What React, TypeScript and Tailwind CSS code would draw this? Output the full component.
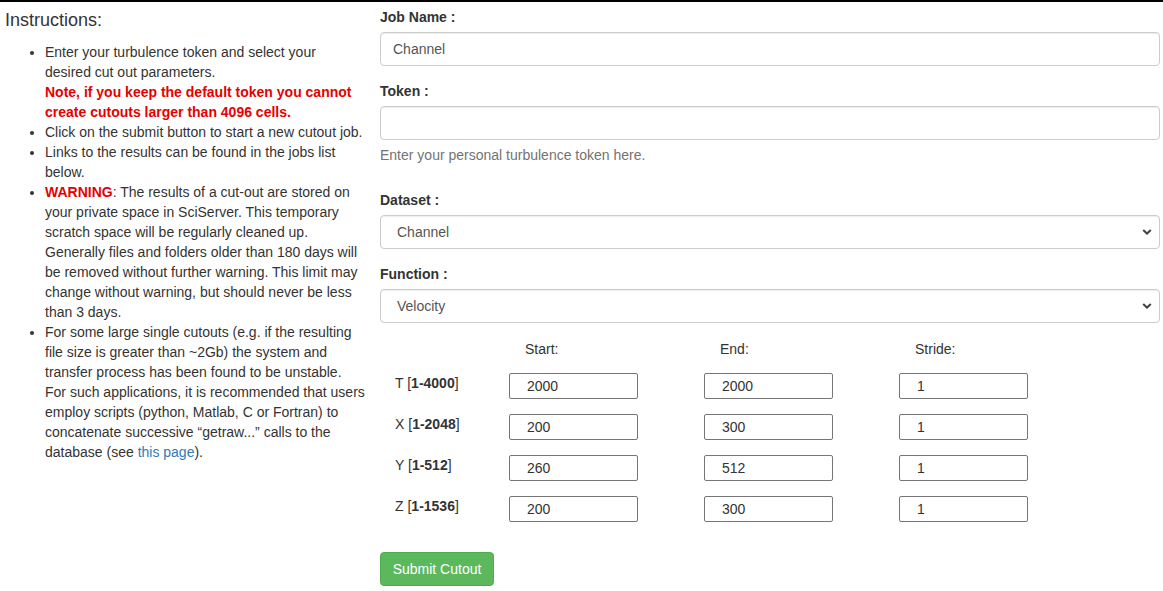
import React from "react";

const font = { fontFamily: '"Liberation Sans", Arial, Helvetica, sans-serif' };

function Chevron() {
  return (
    <svg
      className="pointer-events-none absolute right-[8px] top-1/2 -translate-y-1/2"
      width="10"
      height="7"
      viewBox="0 0 10 7"
    >
      <path d="M1.2 1.4 L5 5 L8.8 1.4" fill="none" stroke="#444" strokeWidth="2" />
    </svg>
  );
}

function Select({ value }: { value: string }) {
  return (
    <div className="relative h-[34px] w-full">
      <select
        defaultValue={value}
        className="h-[34px] w-full appearance-none rounded-[4px] border border-[#ccc] bg-white pl-[16px] text-[14px] text-[#555] shadow-[inset_0_1px_1px_rgba(0,0,0,0.075)] outline-none"
        style={font}
      >
        <option>{value}</option>
      </select>
      <Chevron />
    </div>
  );
}

function NumInput({ value }: { value: string }) {
  return (
    <input
      defaultValue={value}
      className="h-[26px] w-[129px] rounded-[2px] border border-[#767676] bg-white pl-[17px] text-[14px] text-[#333] outline-none"
      style={font}
    />
  );
}

const rows = [
  { axis: "T", range: "1-4000", start: "2000", end: "2000", stride: "1" },
  { axis: "X", range: "1-2048", start: "200", end: "300", stride: "1" },
  { axis: "Y", range: "1-512", start: "260", end: "512", stride: "1" },
  { axis: "Z", range: "1-1536", start: "200", end: "300", stride: "1" },
];

export default function App() {
  return (
    <div
      className="h-[591px] w-[1163px] overflow-hidden border-t-2 border-black bg-white text-[14px] leading-[20px] text-[#333]"
      style={font}
    >
      <div className="flex">
        {/* Left column */}
        <div className="w-[365px] shrink-0 pl-[5px] pt-[8px]">
          <div className="text-[18px] leading-[20px] text-[#333]">Instructions:</div>
          <ul className="mt-[12px] list-disc pl-[40px]">
            <li>
              Enter your turbulence token and select your desired cut out parameters.
              <br />
              <b className="text-[#e60000]">
                Note, if you keep the default token you cannot create cutouts larger than 4096 cells.
              </b>
            </li>
            <li>Click on the submit button to start a new cutout job.</li>
            <li>Links to the results can be found in the jobs list below.</li>
            <li>
              <b className="text-[#e60000]">WARNING</b>: The results of a cut-out are stored on your
              private space in SciServer. This temporary scratch space will be regularly cleaned up.
              Generally files and folders older than 180 days will be removed without further
              warning. This limit may change without warning, but should never be less than 3 days.
            </li>
            <li>
              For some large single cutouts (e.g. if the resulting file size is greater than ~2Gb)
              the system and transfer process has been found to be unstable. For such applications,
              it is recommended that users employ scripts (python, Matlab, C or Fortran) to
              concatenate successive “getraw...” calls to the database (see{" "}
              <a className="text-[#337ab7]" href="#">
                this page
              </a>
              ).
            </li>
          </ul>
        </div>

        {/* Right column */}
        <div className="ml-[15px] w-[780px] shrink-0 pt-[5px]">
          <div className="flex flex-col">
            <label className="font-bold">Job Name :</label>
            <input
              defaultValue="Channel"
              className="mt-[5px] h-[34px] w-full rounded-[4px] border border-[#ccc] bg-white px-[12px] text-[14px] text-[#555] shadow-[inset_0_1px_1px_rgba(0,0,0,0.075)] outline-none"
              style={font}
            />

            <label className="mt-[15px] font-bold">Token :</label>
            <input
              className="mt-[5px] h-[34px] w-full rounded-[4px] border border-[#ccc] bg-white px-[12px] text-[14px] text-[#555] shadow-[inset_0_1px_1px_rgba(0,0,0,0.075)] outline-none"
              style={font}
            />
            <div className="mt-[5px] text-[#737373]">Enter your personal turbulence token here.</div>

            <label className="mt-[25px] font-bold">Dataset :</label>
            <div className="mt-[5px]">
              <Select value="Channel" />
            </div>

            <label className="mt-[15px] font-bold">Function :</label>
            <div className="mt-[5px]">
              <Select value="Velocity" />
            </div>

            {/* Table */}
            <div className="mt-[16px] flex pl-[15px]">
              <div className="w-[114px]" />
              <div className="w-[195px] pl-[16px]">Start:</div>
              <div className="w-[195px] pl-[16px]">End:</div>
              <div className="w-[195px] pl-[16px]">Stride:</div>
            </div>
            <div className="mt-[14px] flex flex-col gap-[15px]">
              {rows.map((r) => (
                <div key={r.axis} className="flex items-start pl-[15px]">
                  <div className="w-[114px]">
                    {r.axis} [<b>{r.range}</b>]
                  </div>
                  <div className="w-[195px]">
                    <NumInput value={r.start} />
                  </div>
                  <div className="w-[195px]">
                    <NumInput value={r.end} />
                  </div>
                  <div className="w-[195px]">
                    <NumInput value={r.stride} />
                  </div>
                </div>
              ))}
            </div>

            <div className="mt-[30px]">
              <button
                className="h-[34px] w-[114px] rounded-[4px] border border-[#4cae4c] bg-[#5cb85c] text-[14px] text-white"
                style={font}
              >
                Submit Cutout
              </button>
            </div>
          </div>
        </div>
      </div>
    </div>
  );
}
